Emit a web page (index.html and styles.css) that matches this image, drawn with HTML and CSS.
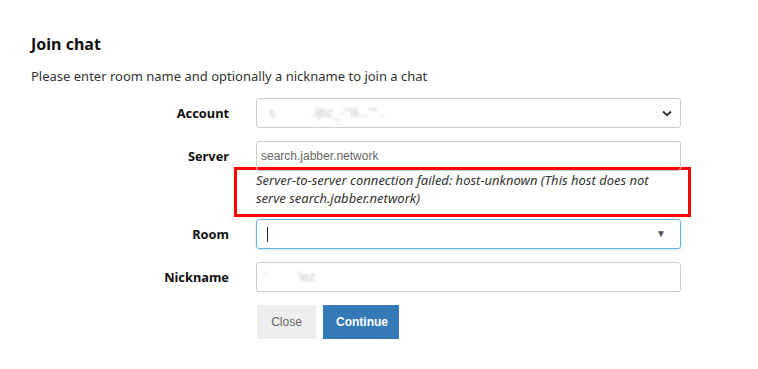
FILE: index.html
```html
<!DOCTYPE html>
<html>
<head>
    <title>Join chat</title>
    <link rel="stylesheet" href="styles.css">
</head>
<body>
    <div class="dialog">
        <h1>Join chat</h1>
        <p class="intro">Please enter room name and optionally a nickname to join a chat</p>
        <form class="form">
            <div class="row">
                <label>Account</label>
                <div class="field">
                    <div class="control select">
                        <span class="blurred">s&nbsp;&nbsp;&nbsp;&nbsp;&nbsp;&nbsp;&nbsp;&nbsp;&nbsp;&nbsp;&nbsp;.ijbz_-'''lli...'''' .</span>
                        <svg class="chevron" width="10" height="7" viewBox="0 0 10 7">
                            <path d="M1 1.5 L5 5.2 L9 1.5" fill="none" stroke="#333" stroke-width="2"/>
                        </svg>
                    </div>
                </div>
            </div>
            <div class="row">
                <label>Server</label>
                <div class="field">
                    <div class="control">search.jabber.network</div>
                    <div class="help">Server-to-server connection failed: host-unknown (This host does not serve search.jabber.network)</div>
                </div>
            </div>
            <div class="row row-tight">
                <label>Room</label>
                <div class="field">
                    <div class="control focused">
                        <span class="caret"></span>
                        <span class="arrow">&#9660;</span>
                    </div>
                </div>
            </div>
            <div class="row">
                <label>Nickname</label>
                <div class="field">
                    <div class="control"><span class="blurred">·'&nbsp;&nbsp;&nbsp;&nbsp;&nbsp;&nbsp;&nbsp;&nbsp;&nbsp;'iez</span></div>
                </div>
            </div>
            <div class="row">
                <span class="spacer"></span>
                <div class="buttons">
                    <button type="button" class="btn btn-default">Close</button>
                    <button type="button" class="btn btn-primary">Continue</button>
                </div>
            </div>
        </form>
    </div>
</body>
</html>
```

FILE: styles.css
```css
body {
    margin: 0;
    padding: 0;
    background-color: #ffffff;
    color: #212529;
    font-family: 'Noto Sans', 'Open Sans', Arial, sans-serif;
}
.dialog {
    padding: 33px 0 0 31px;
}
.dialog h1 {
    font-size: 16px;
    font-weight: bold;
    margin: 0;
    line-height: 22px;
    color: #111;
}
.intro {
    font-size: 13px;
    margin: 12px 0 0 0;
    line-height: 18px;
    color: #333;
}
.form {
    margin-top: 13px;
}
.row {
    display: flex;
    align-items: flex-start;
    margin-bottom: 13px;
}
.row-tight {
    margin-top: -11px;
}
.row label,
.spacer {
    width: 198px;
    flex-shrink: 0;
    margin-right: 27px;
    text-align: right;
    font-size: 12.8px;
    font-weight: bold;
    line-height: 30px;
    color: #111;
}
.field {
    width: 425px;
}
.control {
    box-sizing: border-box;
    height: 30px;
    border: 1px solid #cccccc;
    border-radius: 3px;
    padding: 0 10px 0 4px;
    font-family: 'Liberation Sans', Arial, sans-serif;
    font-size: 12px;
    line-height: 28px;
    color: #666;
    display: flex;
    align-items: center;
    position: relative;
}
.select {
    padding-left: 12px;
}
.blurred {
    color: #c4c4c4;
    filter: blur(0.9px);
    white-space: pre;
}
.chevron {
    margin-left: auto;
    margin-right: -2px;
}
.focused {
    border-color: #66afe9;
    box-shadow: 0 1px 3px rgba(102, 175, 233, 0.35);
    padding-left: 10px;
    padding-right: 14px;
}
.caret {
    width: 1px;
    height: 15px;
    background-color: #222;
}
.arrow {
    margin-left: auto;
    font-size: 10px;
    color: #555;
}
.help {
    margin: -4px -10px 0 -22px;
    border: 3px solid #ff0000;
    padding: 1px 20px 7px 19px;
    font-size: 13px;
    font-style: italic;
    line-height: 18px;
    color: #333;
}
.buttons {
    display: flex;
    gap: 7px;
    margin-left: 1px;
}
.btn {
    height: 34px;
    border: none;
    border-radius: 0;
    font-family: 'Liberation Sans', Arial, sans-serif;
    font-size: 12px;
    padding: 0 13px;
    cursor: pointer;
}
.btn-default {
    background-color: #eeeeee;
    color: #666;
    width: 59px;
}
.btn-primary {
    background-color: #337ab7;
    color: #ffffff;
    font-weight: bold;
    width: 76px;
}
```
